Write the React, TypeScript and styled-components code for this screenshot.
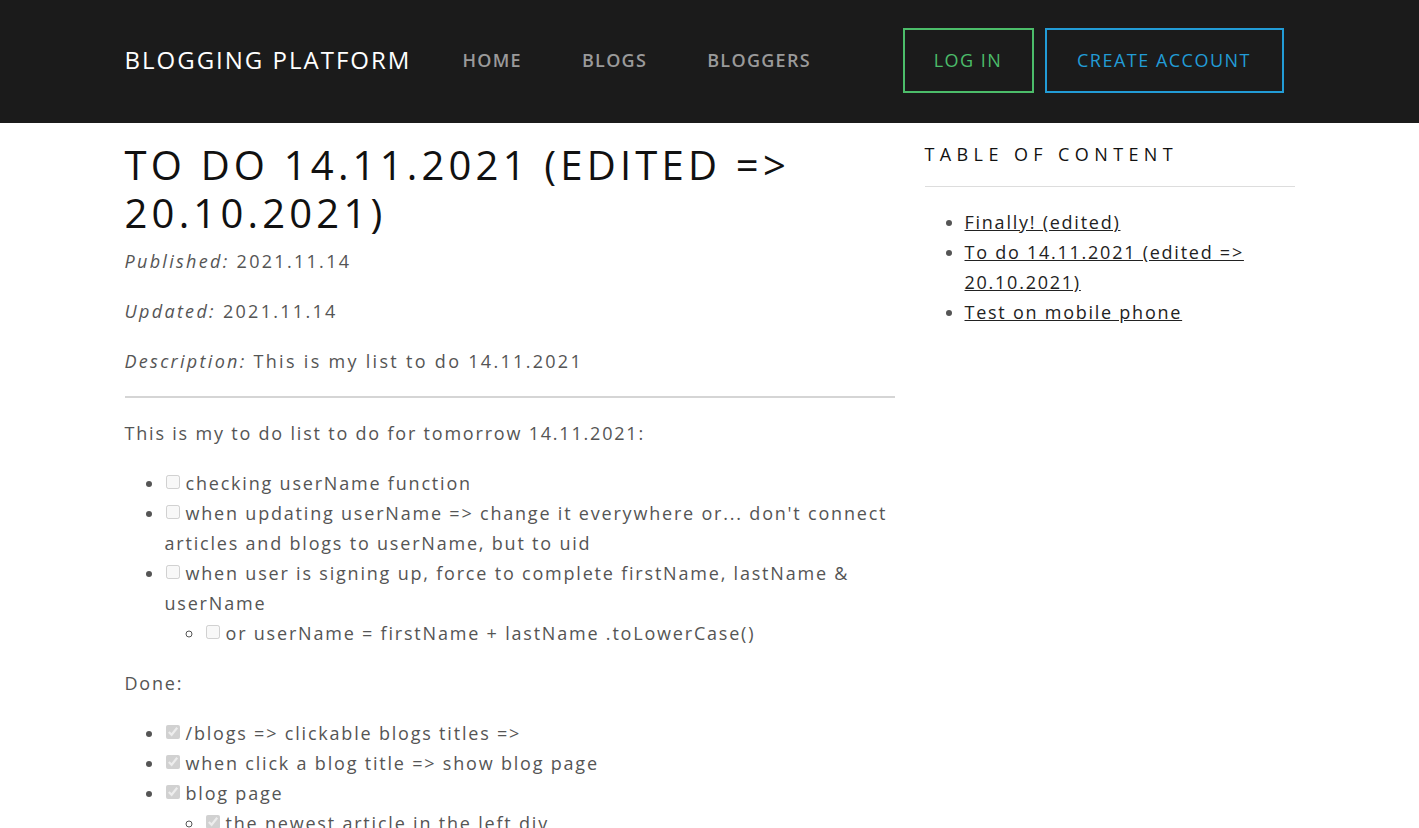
import React from "react";
import styled, { createGlobalStyle } from "styled-components";

const Global = createGlobalStyle`
  html, body { margin: 0; padding: 0; background: #fff; }
  body { font-family: "Open Sans", "Liberation Sans", sans-serif; }
`;

const Header = styled.header`
  background: #1b1b1b;
  height: 123px;
`;

const HeaderInner = styled.div`
  width: 1170px;
  margin: 0 auto;
  height: 100%;
  display: flex;
  align-items: center;
`;

const Logo = styled.a`
  color: #fff;
  font-size: 24px;
  letter-spacing: 2px;
  text-decoration: none;
  margin-right: 21px;
  margin-top: -4px;
`;

const Nav = styled.nav`
  display: flex;
  flex: 1;
  margin-top: -4px;
`;

const NavLink = styled.a`
  color: #9a9a9a;
  font-size: 18px;
  font-weight: 600;
  letter-spacing: 1.3px;
  text-decoration: none;
  padding: 0 30px;
`;

const Actions = styled.div`
  display: flex;
  gap: 11px;
  margin-right: 11px;
  margin-top: -2px;
`;

const OutlineButton = styled.button<{ $color: string; $w: number }>`
  background: transparent;
  border: 2px solid ${(p) => p.$color};
  color: ${(p) => p.$color};
  height: 65px;
  width: ${(p) => p.$w}px;
  font-family: inherit;
  font-size: 18px;
  letter-spacing: 1.5px;
  padding: 0 0 1px;
  cursor: pointer;
`;

const Container = styled.div`
  width: 1170px;
  margin: 0 auto;
  display: grid;
  grid-template-columns: 770px 370px;
  column-gap: 30px;
`;

const Article = styled.article`
  color: #555;
  font-size: 18px;
  line-height: 30px;
  letter-spacing: 1.8px;
`;

const Title = styled.h1`
  font-size: 40px;
  line-height: 48px;
  font-weight: 400;
  letter-spacing: 4.2px;
  color: #111;
  text-transform: uppercase;
  margin: 18px 0 9px;
`;

const Meta = styled.p`
  margin: 0 0 20px;
  letter-spacing: 2.3px;
  em { font-style: italic; }
`;

const Rule = styled.hr`
  border: 0;
  border-top: 2px solid #d5d5d5;
  margin: 20px 0;
`;

const Para = styled.p`
  margin: 20px 0;
`;

const List = styled.ul<{ $nested?: boolean }>`
  margin: ${(p) => (p.$nested ? "0" : "20px 0")};
  padding-left: 40px;
  list-style-type: ${(p) => (p.$nested ? "circle" : "disc")};
`;

const Item = styled.li`
  input {
    margin: 0 6px 0 1px;
    width: 14px;
    height: 14px;
    vertical-align: 1px;
  }
`;

const Sidebar = styled.aside`
  font-size: 18px;
  line-height: 30px;
  letter-spacing: 1.75px;
`;

const SideTitle = styled.h4`
  margin: 16px 0 0;
  font-size: 18px;
  font-weight: 400;
  letter-spacing: 5.4px;
  color: #111;
  line-height: 30px;
`;

const SideRule = styled.hr`
  border: 0;
  border-top: 1px solid #ddd;
  margin: 17px 0 20px;
`;

const TocList = styled.ul`
  margin: 0;
  padding-left: 40px;
  color: #555;
`;

const TocLink = styled.a`
  color: #222;
  text-decoration: underline;
`;

type Todo = { text: string; done?: boolean; children?: Todo[] };

const todo: Todo[] = [
  { text: "checking userName function" },
  { text: "when updating userName => change it everywhere or... don't connect articles and blogs to userName, but to uid" },
  {
    text: "when user is signing up, force to complete firstName, lastName & userName",
    children: [{ text: "or userName = firstName + lastName .toLowerCase()" }],
  },
];

const done: Todo[] = [
  { text: "/blogs => clickable blogs titles =>", done: true },
  { text: "when click a blog title => show blog page", done: true },
  {
    text: "blog page",
    done: true,
    children: [{ text: "the newest article in the left div", done: true }],
  },
];

const Tasks: React.FC<{ items: Todo[]; nested?: boolean }> = ({ items, nested }) => (
  <List $nested={nested}>
    {items.map((t, i) => (
      <Item key={i}>
        <input type="checkbox" disabled checked={!!t.done} readOnly />
        {t.text}
        {t.children && <Tasks items={t.children} nested />}
      </Item>
    ))}
  </List>
);

export default function App() {
  return (
    <>
      <Global />
      <Header>
        <HeaderInner>
          <Logo href="#">BLOGGING PLATFORM</Logo>
          <Nav>
            <NavLink href="#">HOME</NavLink>
            <NavLink href="#">BLOGS</NavLink>
            <NavLink href="#">BLOGGERS</NavLink>
          </Nav>
          <Actions>
            <OutlineButton $color="#4cbd6a" $w={131}>LOG IN</OutlineButton>
            <OutlineButton $color="#229cd6" $w={239}>CREATE ACCOUNT</OutlineButton>
          </Actions>
        </HeaderInner>
      </Header>
      <Container>
        <Article>
          <Title>To do 14.11.2021 (edited =&gt; 20.10.2021)</Title>
          <Meta>
            <em>Published:</em> 2021.11.14
          </Meta>
          <Meta>
            <em>Updated:</em> 2021.11.14
          </Meta>
          <Meta>
            <em>Description:</em> This is my list to do 14.11.2021
          </Meta>
          <Rule />
          <Para>This is my to do list to do for tomorrow 14.11.2021:</Para>
          <Tasks items={todo} />
          <Para>Done:</Para>
          <Tasks items={done} />
        </Article>
        <Sidebar>
          <SideTitle>TABLE OF CONTENT</SideTitle>
          <SideRule />
          <TocList>
            <li><TocLink href="#">Finally! (edited)</TocLink></li>
            <li><TocLink href="#">To do 14.11.2021 (edited =&gt; 20.10.2021)</TocLink></li>
            <li><TocLink href="#">Test on mobile phone</TocLink></li>
          </TocList>
        </Sidebar>
      </Container>
    </>
  );
}
